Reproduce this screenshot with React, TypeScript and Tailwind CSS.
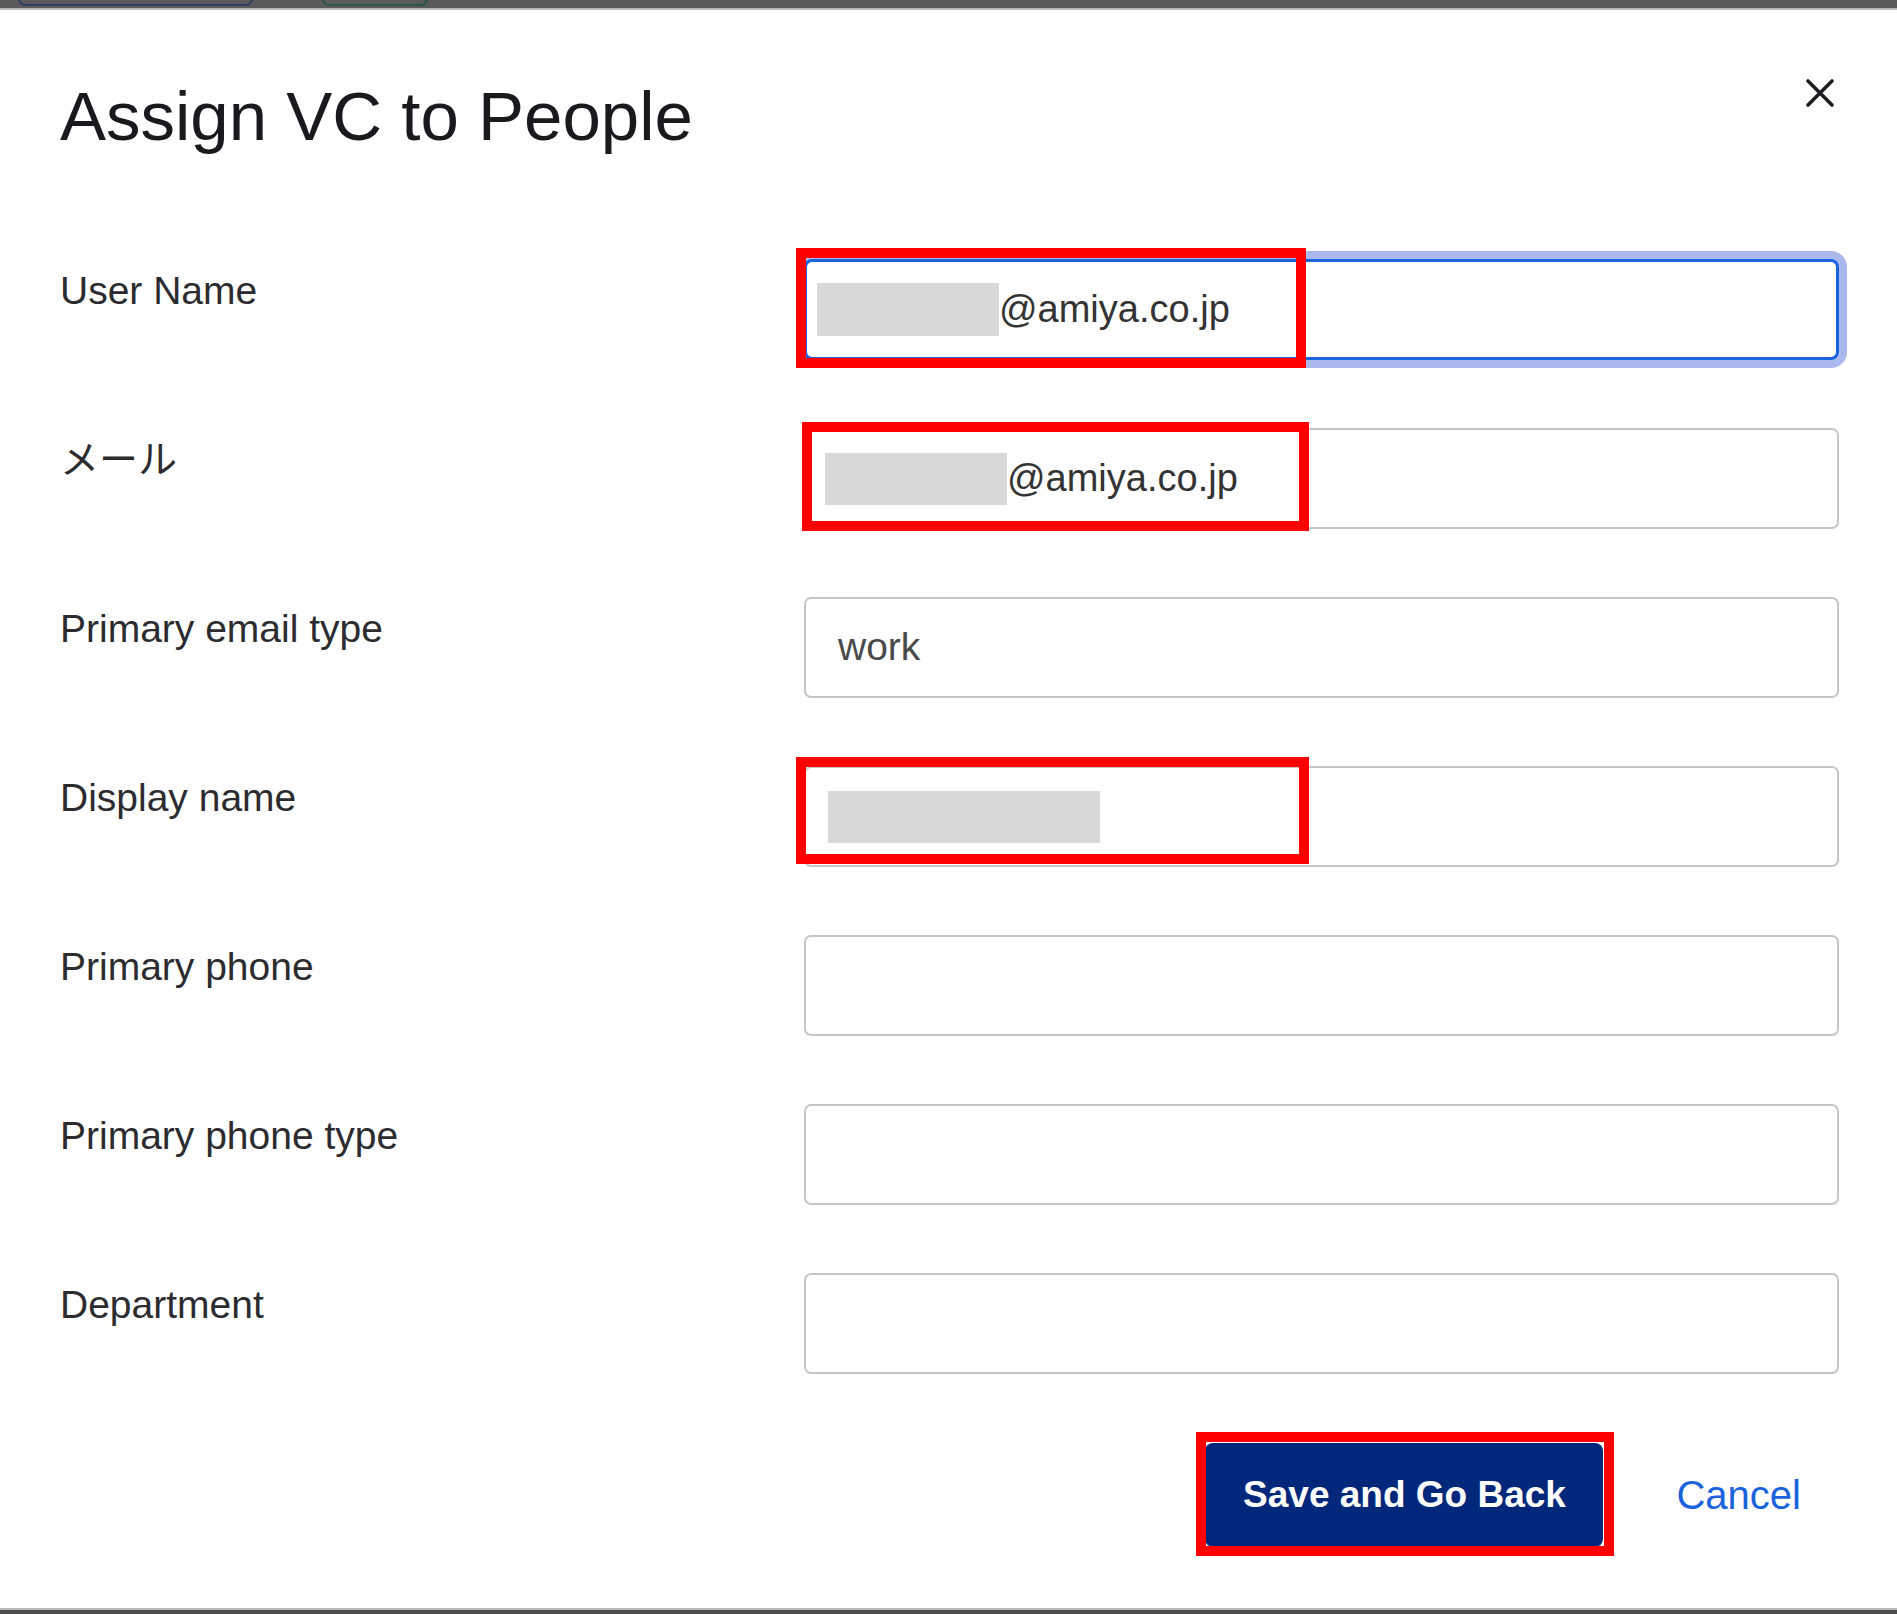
import React from "react";

const Redact = ({ w, ml }: { w: string; ml: string }) => (
  <span className={`inline-block h-[52px] bg-[#d8d8d8] ${w} ${ml}`} />
);

export default function App() {
  const rows: { label: string; content?: React.ReactNode; focused?: boolean }[] = [
    {
      label: "User Name",
      focused: true,
      content: (
        <div className="flex items-center h-full">
          <span className="inline-block h-[53px] w-[182px] ml-[10px] bg-[#d8d8d8]" />
          <span className="text-[38px] text-[#333333]">@amiya.co.jp</span>
        </div>
      ),
    },
    {
      label: "メール",
      content: (
        <div className="flex items-center h-full">
          <Redact w="w-[182px]" ml="ml-[19px]" />
          <span className="text-[38px] text-[#333333]">@amiya.co.jp</span>
        </div>
      ),
    },
    {
      label: "Primary email type",
      content: (
        <div className="flex items-center h-full pl-[32px]">
          <span className="text-[39px] text-[#4a4a4a]">work</span>
        </div>
      ),
    },
    {
      label: "Display name",
      content: (
        <div className="flex items-center h-full">
          <Redact w="w-[272px]" ml="ml-[22px]" />
        </div>
      ),
    },
    { label: "Primary phone" },
    { label: "Primary phone type" },
    { label: "Department" },
  ];

  return (
    <div className="relative w-[1897px] h-[1614px] bg-white overflow-hidden flex flex-col font-['Liberation_Sans','Noto_Sans_CJK_JP',sans-serif]">
      {/* top clipped toolbar strip */}
      <div className="h-[8px] bg-[#5a5a5c] overflow-hidden flex items-end">
        <div className="ml-[18px] w-[235px] h-[16px] border-2 border-[#2d3f68] rounded-[7px] mb-[2px]" />
        <div className="ml-[69px] w-[106px] h-[16px] border-2 border-[#27573f] rounded-[7px] mb-[2px]" />
      </div>
      <div className="h-[2px] bg-[#b8b8b8]" />

      {/* header */}
      <div className="flex justify-between items-start pl-[60px] pr-[62px] pt-[72px]">
        <h1 className="text-[69px] leading-none text-[#1a1a1e]">Assign VC to People</h1>
        <svg width="30" height="30" viewBox="0 0 30 30" className="mt-[-4px]">
          <path d="M3 3 L27 27 M27 3 L3 27" stroke="#1d1d21" strokeWidth="3.6" strokeLinecap="round" />
        </svg>
      </div>

      {/* form rows */}
      <div className="mt-[108px] flex flex-col gap-[68px] pl-[60px]">
        {rows.map((r) => (
          <div key={r.label} className="grid grid-cols-[744px_1035px]">
            <div className="pt-[10px] text-[39px] leading-[44px] text-[#2c2c30]">{r.label}</div>
            <div
              className={
                r.focused
                  ? "h-[101px] rounded-[8px] border-[3px] border-[#1a63dc] bg-white shadow-[0_0_0_8px_#aab8ed]"
                  : "h-[101px] rounded-[7px] border-2 border-[#c5c5cb] bg-white"
              }
            >
              {r.content}
            </div>
          </div>
        ))}
      </div>

      {/* actions */}
      <div className="mt-[69px] flex justify-end items-center pr-[96px]">
        <button className="w-[398px] h-[104px] rounded-[8px] bg-[#00287a] text-white text-[37px] font-bold">
          Save and Go Back
        </button>
        <span className="ml-[73px] text-[40px] text-[#1a63dc]">Cancel</span>
      </div>

      <div className="flex-1" />
      <div className="h-[2px] bg-[#b8b8b8]" />
      <div className="h-[4px] bg-[#4a4a4c]" />

      {/* red annotation boxes */}
      <div className="absolute left-[796px] top-[248px] w-[510px] h-[120px] border-[10px] border-[#ff0000]" />
      <div className="absolute left-[802px] top-[422px] w-[507px] h-[109px] border-[10px] border-[#ff0000]" />
      <div className="absolute left-[796px] top-[757px] w-[513px] h-[107px] border-[10px] border-[#ff0000]" />
      <div className="absolute left-[1196px] top-[1432px] w-[418px] h-[124px] border-[10px] border-[#ff0000]" />
    </div>
  );
}
